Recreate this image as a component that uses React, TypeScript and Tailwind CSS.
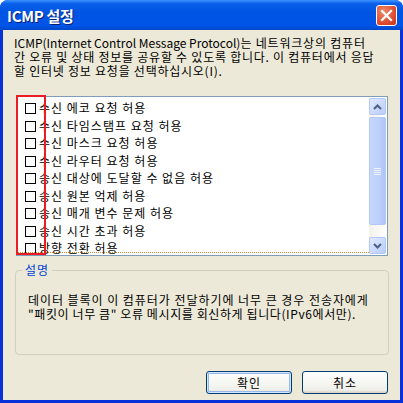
import React from "react";

const font = { fontFamily: '"Noto Sans CJK KR", "DejaVu Sans", sans-serif' };

const items = [
  "수신 에코 요청 허용",
  "수신 타임스탬프 요청 허용",
  "수신 마스크 요청 허용",
  "수신 라우터 요청 허용",
  "송신 대상에 도달할 수 없음 허용",
  "송신 원본 억제 허용",
  "송신 매개 변수 문제 허용",
  "송신 시간 초과 허용",
  "방향 전환 허용",
];

function XpButton({ label, focused }: { label: string; focused?: boolean }) {
  return (
    <div
      className={`w-[86px] h-[23px] rounded-[3px] border border-[#003c74] bg-[linear-gradient(#ffffff,#f0f0ea_85%,#d6d0c5)] flex items-center justify-center text-[12px] tracking-[1px] text-black ${
        focused ? "shadow-[inset_0_0_0_1px_#cee7ff,inset_0_0_0_2px_#98b8ea]" : ""
      }`}
    >
      {label}
    </div>
  );
}

export default function App() {
  return (
    <div className="w-[403px] h-[403px] bg-white" style={font}>
      <div className="w-[403px] h-[403px] rounded-t-[8px] bg-[#0831d9] flex flex-col overflow-hidden">
        {/* Title bar */}
        <div className="h-[30px] shrink-0 bg-[linear-gradient(#3d95ff_0%,#0a5fe9_12%,#0054e3_40%,#0055e8_85%,#0048c8_100%)] flex items-center px-[7px] justify-between">
          <div className="text-white font-bold text-[15px] leading-none tracking-[-0.3px] [text-shadow:1px_1px_0_#0a1e6e]">
            ICMP 설정
          </div>
          <div className="w-[21px] h-[21px] rounded-[3px] border border-white bg-[radial-gradient(circle_at_35%_30%,#f08a6c,#d9452a_70%,#c2361c)] flex items-center justify-center mr-[-1px] mt-[1px]">
            <svg width="13" height="13" viewBox="0 0 13 13">
              <path d="M2 2 L11 11 M11 2 L2 11" stroke="white" strokeWidth="2.2" strokeLinecap="square" />
            </svg>
          </div>
        </div>
        {/* Body */}
        <div className="flex-1 mx-[3px] mb-[3px] bg-[#ece9d8] flex flex-col relative">
          <div className="pl-[11px] pr-[2px] pt-[6px] text-[12px] leading-[14px] text-black whitespace-nowrap">
            <div>
              <span>ICMP(Internet Control Message Protocol)</span>
              <span className="tracking-[0.8px]">는 네트워크상의 컴퓨터</span>
            </div>
            <div className="tracking-[0.75px]">간 오류 및 상태 정보를 공유할 수 있도록 합니다. 이 컴퓨터에서 응답</div>
            <div className="tracking-[0.75px]">할 인터넷 정보 요청을 선택하십시오(I).</div>
          </div>
          {/* List */}
          <div className="ml-[13px] mt-[18px] w-[372px] h-[160px] border border-[#7f9db9] bg-white flex relative">
            <div className="flex-1 pt-[3px] pl-[8px] relative overflow-hidden">
              {items.map((t) => (
                <div key={t} className="h-[17.5px] flex items-center">
                  <div className="w-[11px] h-[11px] border border-black bg-white mr-[3px] shrink-0" />
                  <span className="text-[12px] leading-[12px] -mt-[1px] tracking-[1px] text-black whitespace-nowrap">{t}</span>
                </div>
              ))}
              <div className="absolute left-[1px] right-0 top-[155px] border-t border-dotted border-[#d08a2a]" />
            </div>
            {/* Scrollbar */}
            <div className="w-[17px] my-[1px] mr-[1px] bg-[linear-gradient(90deg,#f3f1ec,#fefefb)] flex flex-col">
              <div className="h-[17px] rounded-[2px] border border-[#b4c8f6] bg-[linear-gradient(135deg,#e0e9fe,#b9cdf9)] flex items-center justify-center">
                <svg width="9" height="6" viewBox="0 0 9 6">
                  <path d="M1 5 L4.5 1.5 L8 5" stroke="#4d6185" strokeWidth="2" fill="none" />
                </svg>
              </div>
              <div className="mt-[2px] h-[108px] rounded-[2px] border border-[#b4c8f6] bg-[linear-gradient(90deg,#c6d7fd,#bcd0fb_60%,#aec4f6)] flex flex-col items-center justify-center gap-[1px]">
                {[0, 1, 2, 3].map((i) => (
                  <div key={i} className="w-[7px] h-[1px] bg-[#eef3fe]" />
                ))}
              </div>
              <div className="flex-1" />
              <div className="h-[17px] rounded-[2px] border border-[#b4c8f6] bg-[linear-gradient(135deg,#e0e9fe,#b9cdf9)] flex items-center justify-center">
                <svg width="9" height="6" viewBox="0 0 9 6">
                  <path d="M1 1 L4.5 4.5 L8 1" stroke="#4d6185" strokeWidth="2" fill="none" />
                </svg>
              </div>
            </div>
            {/* red annotation */}
            <div className="absolute left-[-1px] top-[-2px] w-[30px] h-[160px] border-2 border-[#ec1c24]" />
          </div>
          {/* Group box */}
          <div className="ml-[12px] mt-[14px] w-[374px] h-[85px] border border-[#d0d0bf] rounded-[4px] relative">
            <div className="absolute left-[6px] top-[-8px] px-[3px] bg-[#ece9d8] text-[#0046d5] text-[12px] leading-[14px] tracking-[1px]">
              설명
            </div>
            <div className="pl-[12px] pt-[22px] text-[12px] leading-[14px] text-black whitespace-nowrap">
              <div className="tracking-[0.95px]">데이터 블록이 이 컴퓨터가 전달하기에 너무 큰 경우 전송자에게</div>
              <div className="tracking-[0.6px]">"패킷이 너무 큼" 오류 메시지를 회신하게 됩니다(IPv6에서만).</div>
            </div>
          </div>
          {/* Buttons */}
          <div className="mt-[16px] pr-[12px] flex justify-end gap-[10px]">
            <XpButton label="확인" focused />
            <XpButton label="취소" />
          </div>
        </div>
      </div>
    </div>
  );
}
